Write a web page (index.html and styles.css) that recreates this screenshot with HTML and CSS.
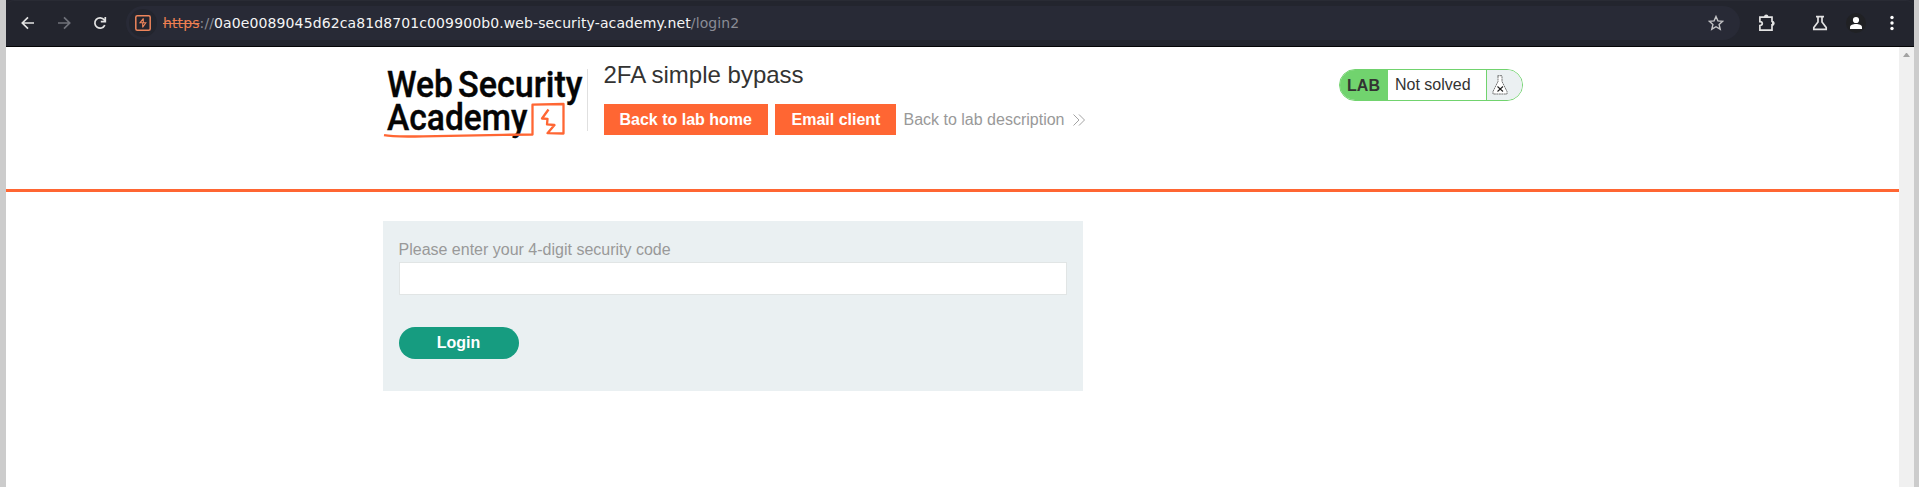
FILE: index.html
```html
<!DOCTYPE html>
<html lang="en">
<head>
<meta charset="utf-8">
<title>2FA simple bypass</title>
<link rel="stylesheet" href="styles.css">
</head>
<body>
<div class="window">
  <header class="toolbar">
    <svg class="nav back" viewBox="0 0 16 16"><path d="M14 8H2.8M8 2.3 2.3 8 8 13.7"/></svg>
    <svg class="nav forward" viewBox="0 0 16 16"><path d="M2 8h11.2M8 2.3 13.7 8 8 13.7"/></svg>
    <svg class="nav reload" viewBox="0 0 16 16"><path d="M12.8 10.2A5.2 5.2 0 1 1 12.2 4.8L13.3 6.6M13.3 2v4.7H8.8"/></svg>
    <div class="omnibox">
      <span class="site"><svg class="burp" viewBox="0 0 16 16"><rect x=".8" y=".8" width="14.4" height="14.4" rx="1.5"/><path class="bolt" d="M8.500 3.300 5 7.800h5.800L7.500 12.500M8.300 3.500V7.800M7.700 8v4.500"/></svg></span>
      <span class="url"><span class="scheme">https</span><span class="dim">://</span>0a0e0089045d62ca81d8701c009900b0.web-security-academy.net<span class="dim">/login2</span></span>
      <svg class="star" viewBox="0 0 16 16"><path d="m8 1.500 1.900 4.400 4.800.4-3.600 3.200 1.100 4.700L8 11.700l-4.200 2.500 1.100-4.700L1.300 6.300l4.800-.4z"/></svg>
    </div>
    <svg class="tool puzzle" viewBox="0 0 18 18"><path d="M1.900 3.200H14v4.300c2.300 0 2.300 3.400 0 3.400v5.200H1.900v-4.500c3.200-.2 3.200-3.800 0-4z"/><path class="solid" d="M6 3c0-3.300 4.500-3.300 4.500 0zM14 7c3 0 3 4.500 0 4.500z"/></svg>
    <svg class="tool flask" viewBox="0 0 16 16"><path d="M4 1.700h8M6 2v5L1.800 12.600v1.700h12.400v-1.700L10 7V2"/></svg>
    <svg class="avatar" viewBox="0 0 20 20"><circle cx="10" cy="10" r="10" fill="#202124"/><circle cx="10" cy="7" r="3.100"/><path d="M4 16v-1.700c0-2.200 3-3.300 6-3.300s6 1.100 6 3.300V16z"/></svg>
    <svg class="dots" viewBox="0 0 4 16"><circle cx="2" cy="2.500" r="1.700"/><circle cx="2" cy="8" r="1.700"/><circle cx="2" cy="13.500" r="1.700"/></svg>
  </header>
  <div class="viewport">
    <main class="page">
      <section class="banner">
        <div class="container banner-row">
          <svg class="logo" viewBox="0 0 204 76">
            <text x="4" y="28" textLength="66" lengthAdjust="spacingAndGlyphs">Web</text>
            <text x="75" y="28" textLength="124.500" lengthAdjust="spacingAndGlyphs">Security</text>
            <text x="4" y="60.500" textLength="140.500" lengthAdjust="spacingAndGlyphs">Academy</text>
            <path d="M1 66.200Q10 68 40 67.300L120 65.800 149.500 65.500V35.700L180.500 35V64.500L164.500 64.200 171.500 56 164 55.300 164.500 49.800 159 49.500 165.500 40.500"/>
          </svg>
          <div class="title-block">
            <h2>2FA simple bypass</h2>
            <div class="actions">
              <a class="button home">Back to lab home</a>
              <a class="button mail">Email client</a>
              <a class="link">Back to lab description <svg viewBox="0 0 12 12"><path d="M.5.5 6 6 .5 11.500M6 .5 11.500 6 6 11.500"/></svg></a>
            </div>
          </div>
          <div class="status">
            <b>LAB</b><span>Not solved</span>
            <i><svg viewBox="0 0 16 20"><path d="M5.500.700h5M6 1v5.500L1 16.500V19h14v-2.500L10 6.500V1"/><path class="cross" d="m5.500 11.500 5.500 5M11 11.500l-5.500 5"/></svg></i>
          </div>
        </div>
      </section>
      <div class="container">
        <form class="login">
          <label for="code">Please enter your 4-digit security code</label>
          <input id="code" type="text">
          <button type="button">Login</button>
        </form>
      </div>
    </main>
    <div class="scrollbar"><span></span></div>
  </div>
</div>
</body>
</html>
```
FILE: styles.css
```css
* { box-sizing: border-box; }
body { margin: 0; background: #ccc; overflow: hidden; font: 16px/20px "Liberation Sans", Arial, sans-serif; color: #333332; }
svg { display: block; flex: none; }
.window { width: 1908px; height: 487px; margin-left: 6px; display: flex; flex-direction: column; background: #23252e; }
.toolbar { height: 47px; flex: none; display: flex; align-items: center; padding: 0 20px 1px 14px; background: #23252e; border-bottom: 1px solid #050507; border-top: 1px solid #292b34; border-radius: 8px 8px 0 0; }
.toolbar svg { fill: none; stroke: #e3e3e3; stroke-width: 1.7; }
.nav { width: 16px; height: 16px; margin-right: 20px; }
.toolbar .forward { stroke: #70727a; }
.omnibox { width: 1614px; height: 34px; margin-right: 18px; margin-left: -2px; padding: 0 16px 0 2px; border-radius: 17px; display: flex; align-items: center; background: #282a36; }
.site { width: 28px; height: 28px; display: grid; place-items: center; border-radius: 50%; background: #23252e; margin-left: 1px; }
.burp { width: 16px; height: 16px; }
.toolbar .burp { stroke: #ee855b; stroke-width: 1.5; }
.toolbar .bolt { stroke-width: 1.1; }
.url { margin-left: 6px; padding-bottom: 1px; flex: 1; font: 14px/20px "DejaVu Sans", sans-serif; letter-spacing: .11px; color: #f5f5f5; white-space: nowrap; }
.scheme { color: #ee7f51; text-decoration: line-through; }
.dim { color: #8a8c95; }
.star { width: 16px; height: 16px; }
.toolbar .star { stroke: #c4c4c6; stroke-width: 1.4; }
.puzzle { width: 18px; height: 18px; margin-right: 36px; }
.toolbar .puzzle .solid { fill: #e3e3e3; stroke: none; }
.flask { width: 16px; height: 16px; margin-right: 18px; }
.avatar { width: 20px; height: 20px; margin-right: 24px; }
.toolbar .avatar, .toolbar .dots { fill: #fff; stroke: none; }
.dots { width: 4px; height: 16px; }
.viewport { flex: 1; display: flex; background: #fff; }
.page { flex: 1; }
.scrollbar { width: 15px; background: #f0f0f0; padding: 6px 4px; }
.scrollbar span { display: block; border: 3.5px solid transparent; border-top: 0; border-bottom: 4px solid #a3a3a3; }
.container { width: 1140px; margin: 0 auto; }
.banner { height: 145px; border-bottom: 3px solid #ff6633; margin-bottom: 29px; }
.banner-row { display: flex; align-items: flex-start; padding-top: 15px; }
.logo { width: 204px; height: 76px; margin-top: 7px; overflow: visible; }
.logo text { font: 500 37px Roboto, sans-serif; fill: #050505; stroke: #050505; stroke-width: .4; }
.logo path { fill: none; stroke: #ff6633; stroke-width: 2.3; stroke-linejoin: round; }
.title-block { border-left: 1px solid #e0e0e0; height: 62px; padding-left: 16px; margin-top: 7px; }
h2 { margin: -9px 0 15px; font: 24px/29px "Liberation Sans", sans-serif; }
.actions { display: flex; }
.button { height: 31px; background: #ff6633; color: #fff; font-weight: bold; line-height: 31px; padding-left: 16px; margin-right: 7px; }
.home { width: 164px; }
.mail { width: 121px; padding-left: 17px; }
.link { display: flex; gap: 9px; align-items: center; color: #999; padding-left: 1px; white-space: nowrap; }
.link svg { width: 12px; height: 12px; fill: none; stroke: #999; stroke-width: .9; }
.status { width: 184px; height: 32px; margin: 7px 0 0 auto; display: flex; border: 1px solid #71d36e; border-radius: 16px; overflow: hidden; line-height: 30px; }
.status b { width: 48px; background: #71d36e; text-align: center; line-height: 32px; }
.status span { flex: 1; padding-left: 7.5px; }
.status i { width: 36px; border-left: 1px solid #71d36e; background: #ebf0f2; padding: 5px 0 0 5px; }
.status svg { width: 16px; height: 20px; fill: #fff; stroke: #555; stroke-width: .8; stroke-dasharray: 2 .5; }
.status .cross { stroke: #222; stroke-width: 1.1; stroke-dasharray: none; fill: none; }
.login { width: 700px; height: 170px; padding: 19px 16px 18px; background: #eaf0f2; color: #999; display: flex; flex-direction: column; align-items: flex-start; }
.login label { margin-bottom: 2px; }
.login input { width: 668px; height: 33px; border: 1px solid #e1e5e5; background: #fff; padding: 0 8px; margin: 0 0 32px; }
.login button { width: 120px; height: 32px; border: 0; border-radius: 16px; background: #169c80; color: #fff; font: bold 16px "Liberation Sans", sans-serif; }
```
